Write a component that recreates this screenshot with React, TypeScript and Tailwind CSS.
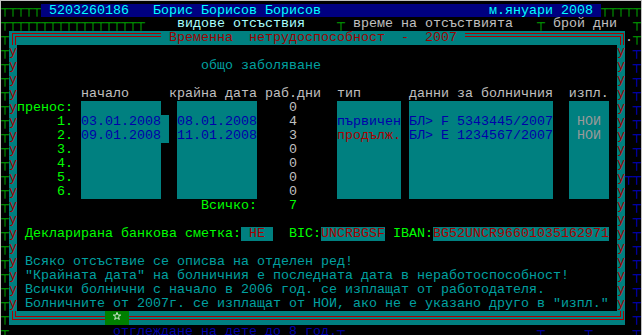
import React from 'react'

const sp = (n: number) => ' '.repeat(n)

const green = 'text-[#00a000]'
const bright = 'text-[#00ff00]'

function Row({ children, className = '' }: { children?: React.ReactNode; className?: string }) {
  return <div className={`flex h-[14px] leading-[14px] whitespace-pre ${className}`}>{children}</div>
}

// left background column (col 0)
const LeftTick = () => <span className={`w-[8px] shrink-0 ${green}`}>┬</span>

// dialog side border cell
const Edge = () => <span className="w-[8px] shrink-0 bg-[#008080] text-[#aa0000] text-center">у</span>

function Right({ kind }: { kind: 'dot' | 'blue' | 'blue2' }) {
  if (kind === 'dot')
    return (
      <>
        <span className="w-[8px] text-[#c0c0c0]">.</span>
        <span className={`w-[8px] ${green}`}>┬</span>
      </>
    )
  if (kind === 'blue2') return <span className="w-[16px] text-[#0000c0]">┬┬</span>
  return (
    <>
      <span className="w-[8px]" />
      <span className="w-[8px] text-[#0000c0]">┬</span>
    </>
  )
}

function DRow({ children, right = 'blue' }: { children?: React.ReactNode; right?: 'dot' | 'blue' | 'blue2' }) {
  return (
    <Row>
      <LeftTick />
      <div className="flex w-[616px] shrink-0">
        <Edge />
        <div className="flex w-[600px] shrink-0 overflow-hidden">{children}</div>
        <Edge />
      </div>
      <Right kind={right} />
    </Row>
  )
}

const HLineTop = ({ w }: { w: string }) => (
  <div className={`${w} shrink-0 pt-[2px]`}>
    <div className="h-[3px] border-t border-[#aa0000]" />
    <div className="border-t border-[#aa0000]" />
  </div>
)

const HLineBottom = ({ w }: { w: string }) => (
  <div className={`${w} shrink-0 pt-[5px]`}>
    <div className="h-[3px] border-t border-[#aa0000]" />
    <div className="border-t border-[#aa0000]" />
  </div>
)

const tableRows = [
  { label: 'пренос: ', from: '', to: '', days: '0', kind: '', kindColor: '', doc: '', pay: '', ext: false },
  { label: '     1. ', from: '03.01.2008', to: '08.01.2008', days: '4', kind: 'първичен', kindColor: 'text-[#0000aa]', doc: 'БЛ> F 5343445/2007', pay: ' НОИ ', ext: true },
  { label: '     2. ', from: '09.01.2008', to: '11.01.2008', days: '3', kind: 'продълж.', kindColor: 'text-[#aa0000]', doc: 'БЛ> E 1234567/2007', pay: ' НОИ ', ext: true },
  { label: '     3. ', from: '', to: '', days: '0', kind: '', kindColor: '', doc: '', pay: '', ext: false },
  { label: '     4. ', from: '', to: '', days: '0', kind: '', kindColor: '', doc: '', pay: '', ext: false },
  { label: '     5. ', from: '', to: '', days: '0', kind: '', kindColor: '', doc: '', pay: '', ext: false },
  { label: '     6. ', from: '', to: '', days: '0', kind: '', kindColor: '', doc: '', pay: '', ext: false },
]

const notes = [
  'Всяко отсъствие се описва на отделен ред!',
  '"Крайната дата" на болничния е последната дата в неработоспособност!',
  'Всички болнични с начало в 2006 год. се изплащат от работодателя.',
  'Болничните от 2007г. се изплащат от НОИ, ако не е указано друго в "изпл."',
]

export default function App() {
  return (
    <div className="w-[642px] h-[335px] overflow-hidden bg-black border-t border-l border-r border-[#c0c0c0] pt-[2px] font-['Liberation_Mono','DejaVu_Sans_Mono',monospace] text-[13.33px] text-[#c0c0c0]">
      {/* header bar */}
      <Row>
        <span className={green}>┬┬┬┬┬</span>
        <span className="w-[560px] h-[13px] self-end leading-[13px] bg-[#000080] text-[#00ffff]">
          {' 5203260186' + sp(3) + 'Борис Борисов Борисов' + sp(21) + 'м.януари 2008 '}
        </span>
        <span className={green}>┬┬┬┬┬</span>
      </Row>

      {/* column captions behind the dialog */}
      <Row>
        <span className={green}>{'┬'.repeat(18)}</span>
        <span>{sp(4)}</span>
        <span className="text-[#a8ffff]">видове отсъствия</span>
        <span>{sp(4)}</span>
        <span className={green}>┬</span>
        <span>{' време на отсъствията' + sp(3)}</span>
        <span className={green}>┬</span>
        <span>{' брой дни  '}</span>
        <span className={green}>┬</span>
      </Row>

      {/* dialog title */}
      <Row>
        <LeftTick />
        <div className="flex w-[616px] shrink-0 bg-[#008080]">
          <div className="w-[8px] shrink-0 pl-[3px] pt-[2px]">
            <div className="h-full border-l border-t border-[#aa0000] pl-[2px] pt-[2px]">
              <div className="h-full border-l border-t border-[#aa0000]" />
            </div>
          </div>
          <HLineTop w="w-[144px]" />
          <span className="w-[8px] shrink-0" />
          <span className="w-[288px] shrink-0 text-[#a00000]">Временна  нетрудоспособност  -  2007</span>
          <span className="w-[8px] shrink-0" />
          <HLineTop w="w-[152px]" />
          <div className="w-[8px] shrink-0 pr-[1px] pt-[2px]">
            <div className="h-full border-r border-t border-[#aa0000] pr-[2px] pt-[2px]">
              <div className="h-full border-r border-t border-[#aa0000]" />
            </div>
          </div>
        </div>
        <Right kind="dot" />
      </Row>

      <DRow />
      <DRow>
        <span className="text-[#00a0a0]">{sp(23) + 'общо заболяване'}</span>
      </DRow>
      <DRow />
      <DRow>
        <span>{sp(8) + 'начало' + sp(5) + 'крайна дата раб.дни  тип' + sp(6) + 'данни за болничния  изпл.'}</span>
      </DRow>

      {tableRows.map((r, i) => (
        <DRow key={i} right={i === 5 ? 'blue2' : 'blue'}>
          <span className={`w-[64px] shrink-0 ${bright}`}>{r.label}</span>
          <span className="w-[80px] shrink-0 bg-[#008080] text-[#0000aa]">{r.from}</span>
          <span className={`w-[8px] shrink-0 ${r.ext ? 'bg-[#008080]' : ''}`} />
          <span className="w-[8px] shrink-0" />
          <span className="w-[80px] shrink-0 bg-[#008080] text-[#0000aa]">{r.to}</span>
          <span className="w-[32px] shrink-0" />
          <span className="w-[8px] shrink-0">{r.days}</span>
          <span className="w-[40px] shrink-0" />
          <span className={`w-[64px] shrink-0 bg-[#008080] ${r.kindColor}`}>{r.kind}</span>
          <span className="w-[8px] shrink-0" />
          <span className="w-[144px] shrink-0 bg-[#008080] text-[#0000aa]">{r.doc}</span>
          <span className="w-[16px] shrink-0" />
          <span className="w-[40px] shrink-0 bg-[#008080] text-[#9a9a9a]">{r.pay}</span>
          <span className="w-[8px] shrink-0" />
        </DRow>
      ))}

      <DRow>
        <span className={bright}>{sp(23) + 'Всичко:' + sp(4) + '7'}</span>
      </DRow>
      <DRow />
      <DRow>
        <span className="w-[8px] shrink-0" />
        <span className={`w-[216px] shrink-0 ${bright}`}>Декларирана банкова сметка:</span>
        <span className="w-[32px] shrink-0 bg-[#008080] text-[#aa0000]"> НЕ </span>
        <span className={`w-[48px] shrink-0 ${bright}`}>{'  BIC:'}</span>
        <span className="w-[64px] shrink-0 bg-[#008080] text-[#aa0000]">UNCRBGSF</span>
        <span className={`w-[48px] shrink-0 ${bright}`}> IBAN:</span>
        <span className="w-[176px] shrink-0 bg-[#008080] text-[#aa0000]">BG52UNCR96601035162971</span>
        <span className="w-[8px] shrink-0" />
      </DRow>
      <DRow />
      {notes.map((n) => (
        <DRow key={n}>
          <span className="text-[#00a0a0]">{' ' + n}</span>
        </DRow>
      ))}

      {/* dialog bottom */}
      <Row>
        <LeftTick />
        <div className="flex w-[616px] shrink-0 bg-[#008080]">
          <div className="w-[8px] shrink-0 pl-[3px] pb-[5px]">
            <div className="h-full border-l border-b border-[#aa0000] pl-[2px] pb-[2px]">
              <div className="h-full border-l border-b border-[#aa0000]" />
            </div>
          </div>
          <HLineBottom w="w-[88px]" />
          <div className="w-[24px] shrink-0 bg-[#008000] flex justify-center pt-[1px]">
            <svg width="8" height="8" viewBox="0 0 10 10">
              <polygon points="5,0.5 6.2,3.8 9.6,3.8 6.9,5.9 7.9,9.3 5,7.3 2.1,9.3 3.1,5.9 0.4,3.8 3.8,3.8" fill="none" stroke="#ffffff" strokeWidth="1" />
            </svg>
          </div>
          <HLineBottom w="w-[488px]" />
          <div className="w-[8px] shrink-0 pr-[1px] pb-[5px]">
            <div className="h-full border-r border-b border-[#aa0000] pr-[2px] pb-[2px]">
              <div className="h-full border-r border-b border-[#aa0000]" />
            </div>
          </div>
        </div>
        <Right kind="blue" />
      </Row>

      {/* partially visible line below */}
      <Row className="text-[#0000aa]">
        <LeftTick />
        <span>{sp(13) + 'отглеждане на дете до 8 год.┬' + sp(24) + '┬' + sp(5) + '┬' + sp(5) + '┬'}</span>
      </Row>
    </div>
  )
}
